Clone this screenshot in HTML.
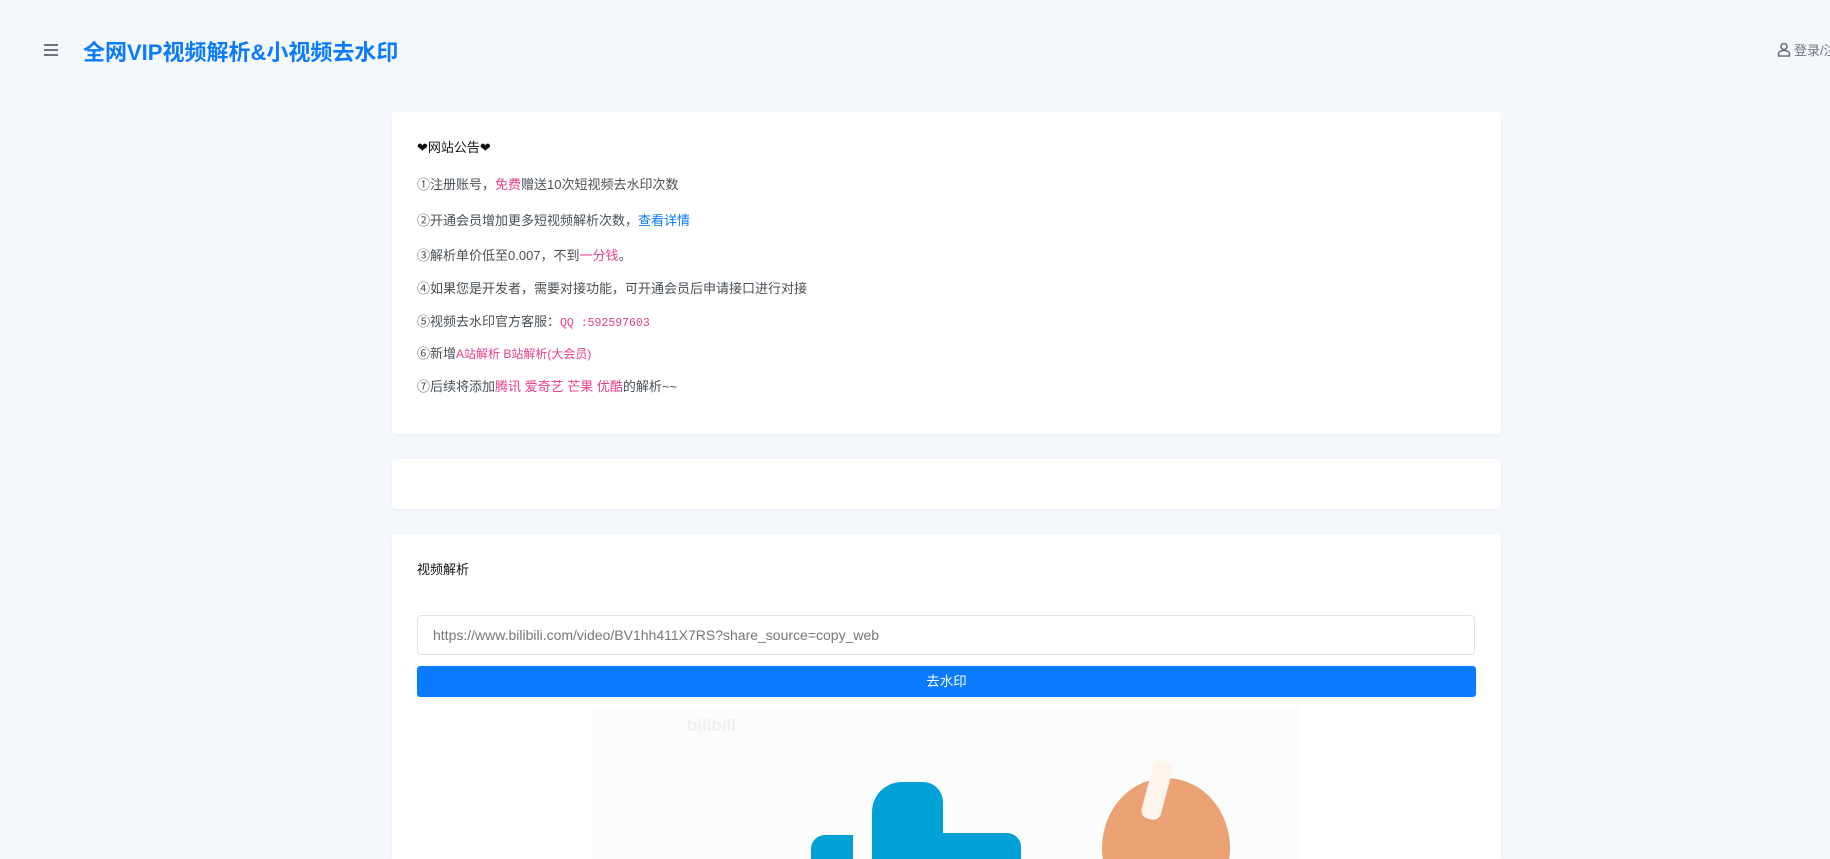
<!DOCTYPE html>
<html style="overflow:hidden;height:859px"><head><meta charset="utf-8"><style>
body{margin:0;width:1830px;height:859px;overflow:hidden;background:#f4f7fc;font-family:"Liberation Sans","Noto Sans CJK SC",sans-serif;position:relative}
.a{position:absolute}
.card{position:absolute;left:392px;width:1109px;background:#fff;border-radius:4px;box-shadow:0 1px 3px rgba(0,0,0,.04)}
.l{position:absolute;left:25px;font-size:13px;color:#495057;white-space:nowrap}
.r{color:#e83e8c}.b{color:#0a7bff}
.m{font-family:"Liberation Mono",monospace;font-size:11.5px;color:#e83e8c}
</style></head><body>
<div class="a" style="left:44px;top:44px;width:14px;height:2px;background:#6c757d;box-shadow:0 5px 0 #6c757d,0 10px 0 #6c757d"></div>
<div class="a" style="left:83px;top:35px;font-size:22px;font-weight:bold;color:#0a7bff">全网VIP视频解析&amp;小视频去水印</div>
<svg class="a" style="left:1777px;top:42px" width="14" height="15" viewBox="0 0 14 15"><circle cx="7" cy="4.5" r="3" fill="none" stroke="#6c757d" stroke-width="1.6"/><path d="M1.5 14v-1.5c0-2.5 2-4 5.5-4s5.5 1.5 5.5 4V14z" fill="none" stroke="#6c757d" stroke-width="1.6"/></svg>
<div class="a" style="left:1794px;top:40px;font-size:13px;color:#6c757d;white-space:nowrap">登录/注册</div>

<div class="card" style="top:112px;height:322px">
<div class="l" style="top:25px;color:#111">❤网站公告❤</div>
<div class="l" style="top:62px">①注册账号，<span class="r">免费</span>赠送10次短视频去水印次数</div>
<div class="l" style="top:98px">②开通会员增加更多短视频解析次数，<span class="b">查看详情</span></div>
<div class="l" style="top:133px">③解析单价低至0.007，不到<span class="r">一分钱</span>。</div>
<div class="l" style="top:166px">④如果您是开发者，需要对接功能，可开通会员后申请接口进行对接</div>
<div class="l" style="top:199px">⑤视频去水印官方客服：<span class="m">QQ :592597603</span></div>
<div class="l" style="top:231px">⑥新增<span class="r" style="font-size:12px">A站解析 B站解析(大会员)</span></div>
<div class="l" style="top:264px">⑦后续将添加<span class="r">腾讯 爱奇艺 芒果 优酷</span>的解析~~</div>
</div>
<div class="card" style="top:459px;height:50px"></div>
<div class="card" style="top:534px;height:325px;overflow:hidden;border-radius:4px 4px 0 0">
<div class="l" style="top:25px;color:#111">视频解析</div>
<div class="a" style="left:25px;top:81px;width:1058px;height:40px;border:1px solid #dee2e6;border-radius:4px;box-sizing:border-box;font-size:14px;color:#777;line-height:38px;padding-left:15px">https://www.bilibili.com/video/BV1hh411X7RS?share_source=copy_web</div>
<div class="a" style="left:25px;top:132px;width:1059px;height:31px;background:#0a7bff;border-radius:3px;color:#fff;font-size:13.5px;text-align:center;line-height:31px">去水印</div>
<div class="a" style="left:200px;top:172px;width:709px;height:153px;background:#fbfcfc;overflow:hidden">
<div class="a" style="left:95px;top:10px;font-size:17px;font-weight:bold;color:#eef0f1">bilibili</div>
<div class="a" style="left:280px;top:76px;width:71px;height:120px;background:#00a1d6;border-radius:30px 20px 0 0"></div>
<div class="a" style="left:280px;top:127px;width:149px;height:80px;background:#00a1d6;border-radius:0 14px 0 0"></div>
<div class="a" style="left:219px;top:129px;width:42px;height:80px;background:#00a1d6;border-radius:14px 0 0 0"></div>
<div class="a" style="left:510px;top:72px;width:128px;height:140px;background:#eaa274;border-radius:50%"></div>
<div class="a" style="left:555px;top:54px;width:20px;height:60px;background:#fff3ee;border-radius:8px;transform:rotate(15deg)"></div>
</div>
</div>
</body></html>
